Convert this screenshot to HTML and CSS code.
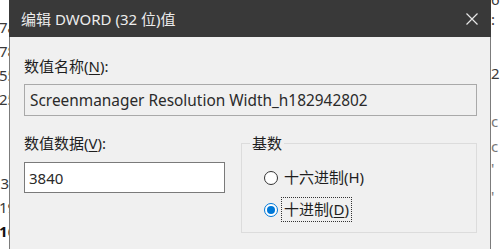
FILE: index.html
```html
<!DOCTYPE html>
<html lang="zh-CN">
<head>
<meta charset="utf-8">
<title>编辑 DWORD (32 位)值</title>
<link rel="stylesheet" href="styles.css">
</head>
<body>
<div class="desk">
  <div class="strip strip-left">
    <div class="row">7a</div>
    <div class="row">78</div>
    <div class="row">55</div>
    <div class="row">25</div>
    <div class="spacer"></div>
    <div class="row"><span class="sel"></span>3</div>
    <div class="row">19</div>
    <div class="row"><b class="dark">1</b>6</div>
  </div>

  <div class="dialog">
    <div class="titlebar">
      <span class="title">编辑 DWORD (32 位)值</span>
      <svg class="close" width="12" height="12" viewBox="0 0 12 12" aria-hidden="true">
        <path d="M0.5 0.5 L11.5 11.5 M11.5 0.5 L0.5 11.5" stroke="#e6e6e6" stroke-width="1.2" fill="none"/>
      </svg>
    </div>
    <div class="content">
      <div class="label label-name">数值名称(<u>N</u>):</div>
      <div class="field field-name">Screenmanager Resolution Width_h182942802</div>
      <div class="lower">
        <div class="col-data">
          <div class="label">数值数据(<u>V</u>):</div>
          <div class="field field-data">3840</div>
        </div>
        <fieldset class="base">
          <legend class="legend">基数</legend>
          <div class="radio-row">
            <span class="radio"></span>
            <span class="radio-label">十六进制(H)</span>
          </div>
          <div class="radio-row second">
            <span class="radio checked"><span class="dot"></span></span>
            <span class="radio-label focus">十进制(<u>D</u>)</span>
          </div>
        </fieldset>
      </div>
    </div>
  </div>

  <div class="strip strip-right">
    <div class="rr r1">6</div>
    <div class="rr r2">:</div>
    <div class="rr r3">2</div>
    <div class="rr r4">c</div>
    <div class="rr r5">c</div>
    <div class="rr r6">'</div>
    <div class="rr r7">'</div>
  </div>
</div>
</body>
</html>
```

FILE: styles.css
```css
* { box-sizing: border-box; }

html, body {
  margin: 0;
  padding: 0;
  background: #ffffff;
}

body {
  width: 500px;
  height: 249px;
  overflow: hidden;
  font-family: "Noto Sans", "Noto Sans CJK SC", sans-serif;
  color: #1e1e1e;
}

.desk {
  display: flex;
  width: 500px;
  height: 249px;
}

.strip {
  overflow: hidden;
  font-size: 15px;
  color: #3a3a3a;
  white-space: nowrap;
}

.strip-left {
  width: 9px;
  flex: none;
  padding-top: 15px;
}

.strip-left .row {
  height: 24px;
  line-height: 24px;
  margin-left: -1px;
  display: flex;
  align-items: center;
}

.strip-left .spacer { height: 60px; }

.sel {
  display: inline-block;
  width: 2px;
  height: 12px;
  background: #2a8ad4;
  margin-right: 1px;
}

.dark { color: #111; font-weight: 700; }

.strip-right {
  width: 9px;
  flex: none;
}

.rr {
  line-height: 14px;
  height: 14px;
}
.r1 { margin-top: -8px; }
.r2 { margin-top: 6px; }
.r3 { margin-top: 40px; }
.r4 { margin-top: 34px; color: #777; }
.r5 { margin-top: 11px; color: #777; }
.r6 { margin-top: 8px; color: #777; }
.r7 { margin-top: 14px; color: #777; }

.dialog {
  width: 482px;
  flex: none;
  height: 249px;
  background: #f0f0f0;
  border-left: 1px solid #7c7c7c;
  border-right: 1px solid #7c7c7c;
  display: flex;
  flex-direction: column;
}

.titlebar {
  height: 37px;
  flex: none;
  background: #393939;
  display: flex;
  align-items: center;
  justify-content: space-between;
  padding: 0 13px 0 11px;
  margin: 0 -1px;
}

.title {
  color: #ececec;
  font-size: 15px;
  line-height: 20px;
  padding-left: 1px;
  padding-top: 1px;
}

.close { display: block; }

.content {
  padding: 20px 13px 0 14px;
}

.label {
  font-size: 15px;
  line-height: 18px;
  height: 18px;
  color: #1e1e1e;
}

.label u, .radio-label u { text-underline-offset: 2px; }

.field {
  color: #2a2a2a;
  display: flex;
  align-items: center;
  white-space: nowrap;
  overflow: hidden;
}

.field-name {
  margin-top: 9px;
  height: 32px;
  width: 453px;
  background: #f0f0f0;
  border: 1px solid #a9a9a9;
  padding-left: 5px;
  font-size: 15.4px;
}

.lower {
  margin-top: 18px;
  display: grid;
  grid-template-columns: 201px 236px;
  column-gap: 16px;
  align-items: start;
}

.field-data {
  margin-top: 10px;
  height: 31px;
  background: #ffffff;
  border: 1px solid #7a7a7a;
  padding-left: 4px;
  font-size: 15px;
}

.base {
  margin: 0;
  border: 1px solid #dcdcdc;
  padding: 13px 0 10px 22px;
  min-width: 0;
}

.legend {
  font-size: 15px;
  line-height: 18px;
  padding: 0 2px;
  margin-left: -14px;
  color: #1e1e1e;
}

.radio-row {
  height: 25px;
  display: flex;
  align-items: center;
}

.radio-row.second { margin-top: 7px; }

.radio {
  width: 14px;
  height: 14px;
  border-radius: 50%;
  border: 1px solid #333333;
  background: #ffffff;
  flex: none;
  display: flex;
  align-items: center;
  justify-content: center;
}

.radio.checked { border-color: #0078d7; }

.dot {
  width: 8px;
  height: 8px;
  border-radius: 50%;
  background: #0078d7;
}

.radio-label {
  margin-left: 3px;
  font-size: 15px;
  line-height: 23px;
  height: 25px;
  padding: 0 2px;
  border: 1px dotted transparent;
  color: #1e1e1e;
}

.radio-label.focus { border-color: #333333; }
```
